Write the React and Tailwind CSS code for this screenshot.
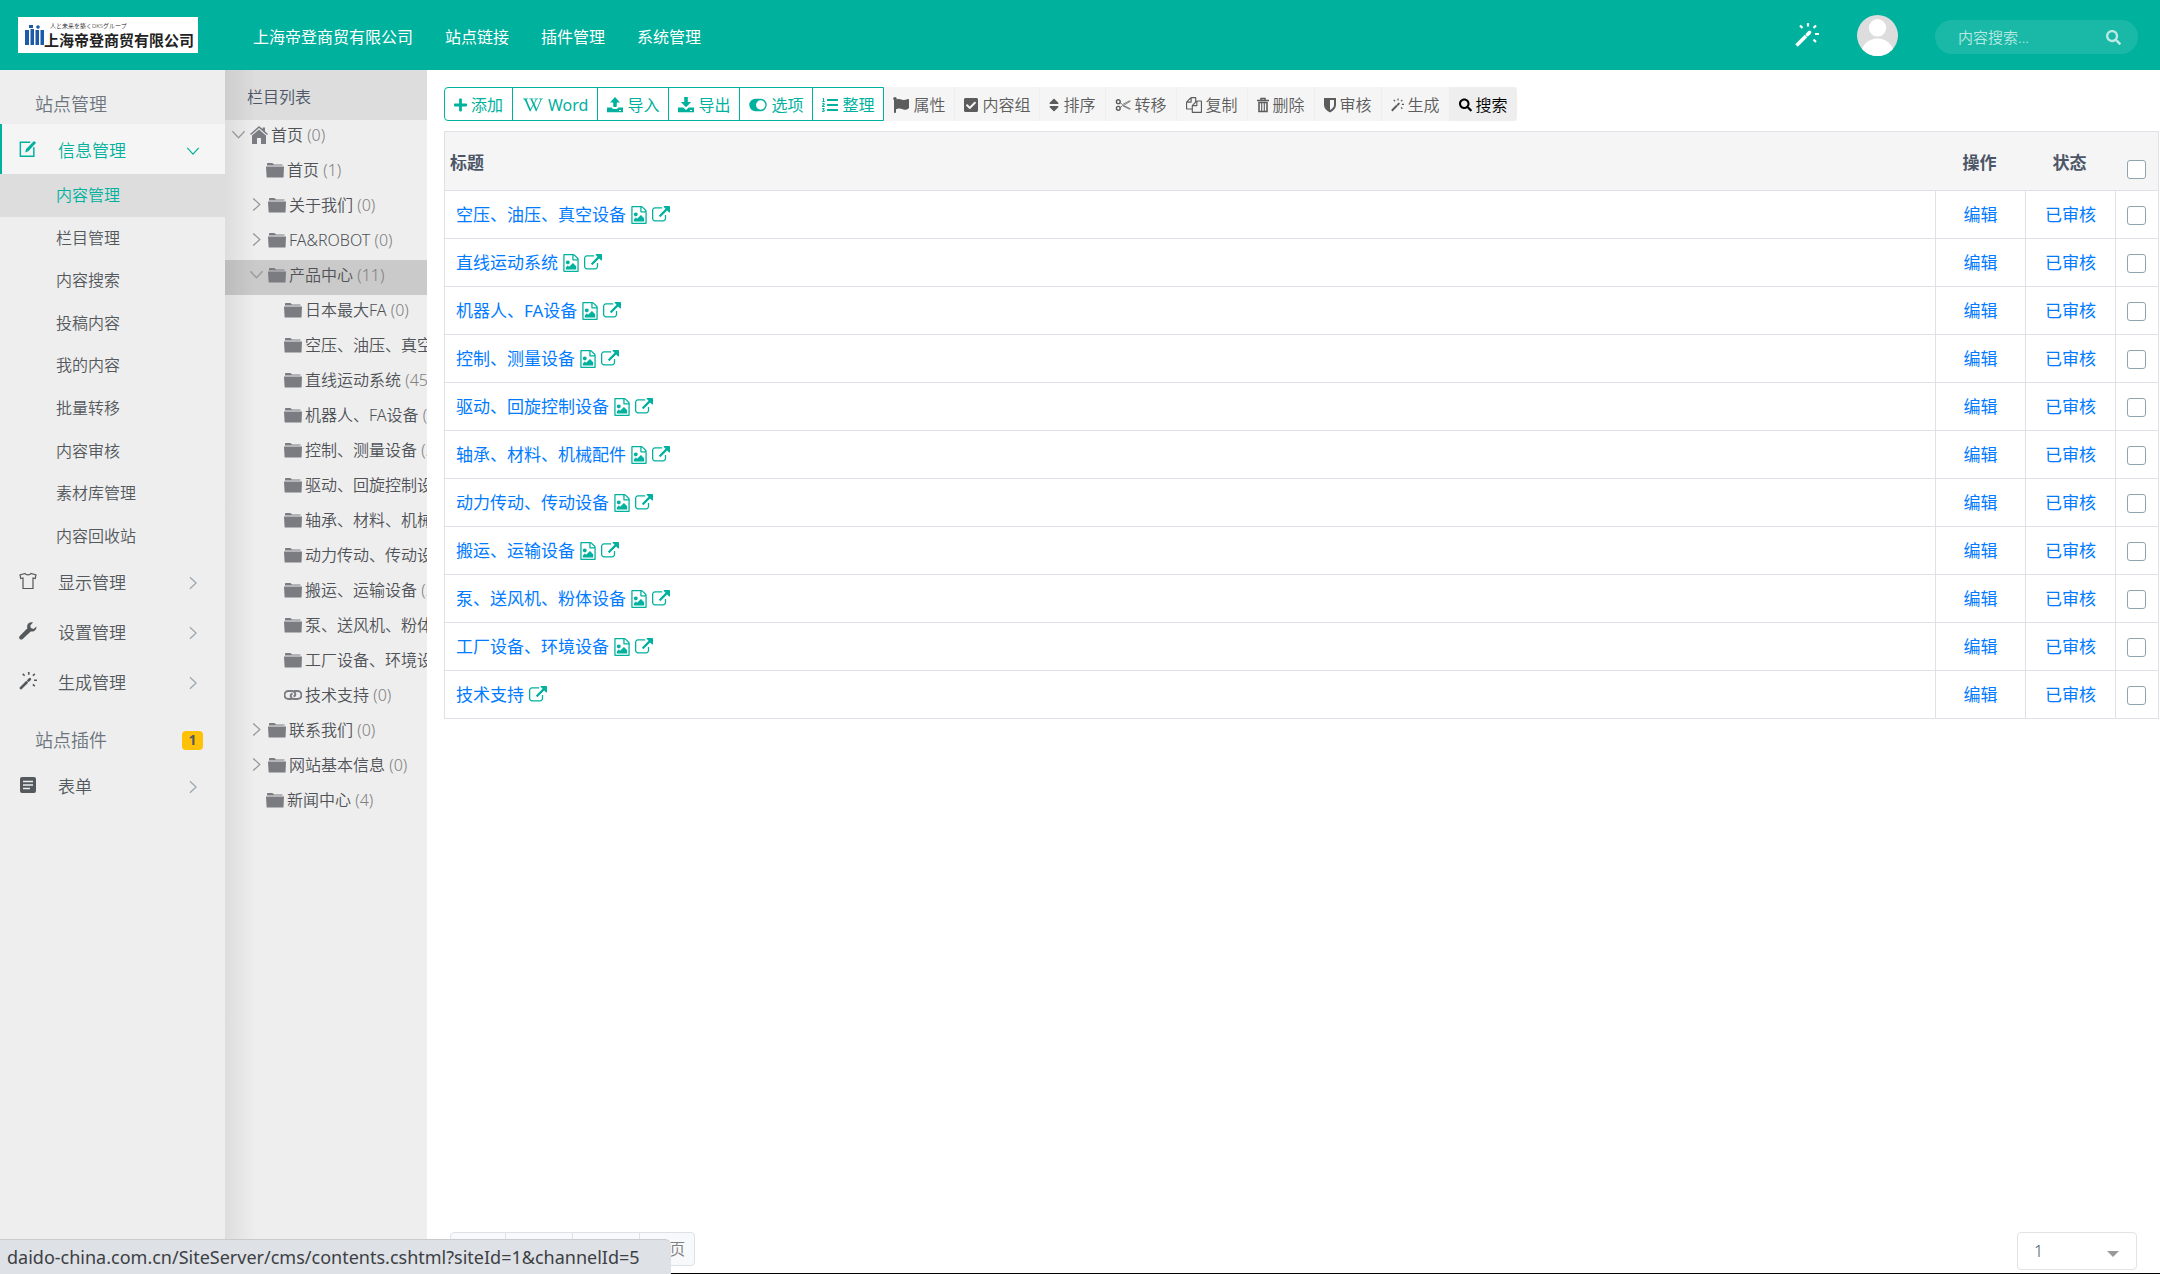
import React from "react";
import { FaWikipediaW, FaListOl, FaFlag, FaCheckSquare, FaSort, FaPlus, FaSearch } from "react-icons/fa";

const navLinks = ["上海帝登商贸有限公司", "站点链接", "插件管理", "系统管理"];

const subMenu = [
  "内容管理",
  "栏目管理",
  "内容搜索",
  "投稿内容",
  "我的内容",
  "批量转移",
  "内容审核",
  "素材库管理",
  "内容回收站",
];

const channels = [
  { name: "首页", count: 1, level: 1 },
  { name: "关于我们", count: 0, level: 1, closed: true },
  { name: "FA&ROBOT", count: 0, level: 1, closed: true },
  { name: "产品中心", count: 11, level: 1, open: true },
  { name: "日本最大FA", count: 0, level: 2 },
  { name: "空压、油压、真空设备", count: 0, level: 2 },
  { name: "直线运动系统", count: 45, level: 2 },
  { name: "机器人、FA设备", count: 0, level: 2 },
  { name: "控制、测量设备", count: 2, level: 2 },
  { name: "驱动、回旋控制设备", count: 0, level: 2 },
  { name: "轴承、材料、机械配件", count: 0, level: 2 },
  { name: "动力传动、传动设备", count: 0, level: 2 },
  { name: "搬运、运输设备", count: 2, level: 2 },
  { name: "泵、送风机、粉体设备", count: 0, level: 2 },
  { name: "工厂设备、环境设备", count: 0, level: 2 },
  { name: "技术支持", count: 0, level: 2, link: true },
  { name: "联系我们", count: 0, level: 1, closed: true },
  { name: "网站基本信息", count: 0, level: 1, closed: true },
  { name: "新闻中心", count: 4, level: 1 },
];

const contents = [
  { title: "空压、油压、真空设备", image: true },
  { title: "直线运动系统", image: true },
  { title: "机器人、FA设备", image: true },
  { title: "控制、测量设备", image: true },
  { title: "驱动、回旋控制设备", image: true },
  { title: "轴承、材料、机械配件", image: true },
  { title: "动力传动、传动设备", image: true },
  { title: "搬运、运输设备", image: true },
  { title: "泵、送风机、粉体设备", image: true },
  { title: "工厂设备、环境设备", image: true },
  { title: "技术支持", image: false },
];

const Wand = ({ className }) => (
  <svg viewBox="0 0 24 24" className={className} fill="none" stroke="currentColor">
    <path d="M1.500 22.500L11 13" strokeWidth="3.600" />
    <path d="M12.500 11.500l2-2" strokeWidth="3.600" strokeLinecap="round" />
    <path d="M13 0v3.500M5 2.500l2.500 2.500M21 2.500L18.500 5M20 11h4M18.500 16.500L21 19" strokeWidth="2.200" />
  </svg>
);

const ExternalLink = ({ className }) => (
  <svg viewBox="0 0 1792 1792" className={className} fill="currentColor">
    <path d="M1408 928v320q0 119-84.5 203.5t-203.5 84.5h-832q-119 0-203.5-84.5t-84.5-203.5v-832q0-119 84.5-203.5t203.5-84.5h704q14 0 23 9t9 23v64q0 14-9 23t-23 9h-704q-66 0-113 47t-47 113v832q0 66 47 113t113 47h832q66 0 113-47t47-113v-320q0-14 9-23t23-9h64q14 0 23 9t9 23zm384-864v512q0 26-19 45t-45 19-45-19l-176-176-652 652q-10 10-23 10t-23-10l-114-114q-10-10-10-23t10-23l652-652-176-176q-19-19-19-45t19-45 45-19h512q26 0 45 19t19 45z" />
  </svg>
);

const ImageFile = ({ className }) => (
  <svg viewBox="128 0 1536 1792" className={className} fill="currentColor">
    <path d="M1596 380q28 28 48 76t20 88v1152q0 40-28 68t-68 28h-1344q-40 0-68-28t-28-68v-1600q0-40 28-68t68-28h896q40 0 88 20t76 48zm-444-244v376h376q-10-29-22-41l-313-313q-12-12-41-22zm384 1528v-1024h-416q-40 0-68-28t-28-68v-416h-768v1536h1280zm-128-448v320h-1024v-192l192-192 128 128 384-384zm-832-192q-80 0-136-56t-56-136 56-136 136-56 136 56 56 136-56 136-136 56z" />
  </svg>
);

const Copy = ({ className }) => (
  <svg viewBox="0 0 1792 1792" className={className} fill="currentColor">
    <path d="M1696 384q40 0 68 28t28 68v1216q0 40-28 68t-68 28h-960q-40 0-68-28t-28-68v-288h-544q-40 0-68-28t-28-68v-672q0-40 20-88t48-76l408-408q28-28 76-48t88-20h416q40 0 68 28t28 68v328q68-40 128-40h416zm-544 213l-299 299h299v-299zm-640-384l-299 299h299v-299zm196 647l316-316v-416h-384v416q0 40-28 68t-68 28h-416v640h512v-256q0-40 20-88t48-76zm956 804v-1152h-384v416q0 40-28 68t-68 28h-416v640h896z" />
  </svg>
);

const Folder = ({ className }) => (
  <svg viewBox="0 0 18 18" className={className} fill="currentColor">
    <path d="M1 4.500V2.800C1 2.200 1.400 2 2 2h4.500l1.500 1.500h8.500v1z" />
    <path d="M0 5.500h18l-.5 11H.7z" />
  </svg>
);

const Upload = ({ className }) => (
  <svg viewBox="0 0 16 16" className={className} fill="currentColor">
    <path d="M8 0L3 5.500h3.200V9c0 1.300 3.600 1.300 3.600 0V5.500H13z" />
    <path d="M0 10.500h4.700c.5 2 6.100 2 6.600 0H16v4.700H0zM12 13v1h2v-1z" fillRule="evenodd" />
  </svg>
);

const Download = ({ className }) => (
  <svg viewBox="0 0 16 16" className={className} fill="currentColor">
    <path d="M8 10.200L2.800 5h3.400V0h3.600v5h3.400z" />
    <path d="M0 10.500h5.200L8 13l2.800-2.500H16v4.700H0zM12 13v1h2v-1z" fillRule="evenodd" />
  </svg>
);

const Toggle = ({ className }) => (
  <svg viewBox="0 0 18 14" className={className} fill="none" stroke="currentColor">
    <path d="M6.500 1.500h5a5.500 5.500 0 010 11h-5a5.500 5.500 0 010-11z" fill="currentColor" strokeWidth="1.400" />
    <circle cx="11.700" cy="7" r="4.700" fill="white" stroke="none" />
  </svg>
);

const Scissors = ({ className }) => (
  <svg viewBox="0 0 17 16" className={className} fill="none" stroke="currentColor">
    <circle cx="3.500" cy="4.500" r="2" strokeWidth="1.500" />
    <circle cx="3.500" cy="11.500" r="2" strokeWidth="1.500" />
    <path d="M5.500 5.500L8 7.500 15.500 3.500l.8.5L9 8.500l7.300 3.500-.8.500L8 8.700l-2.500 2" strokeWidth=".8" />
  </svg>
);

const Trash = ({ className }) => (
  <svg viewBox="0 0 12 16" className={className} fill="none" stroke="currentColor">
    <path d="M0 3.500h12M4 3V1.500h4V3" strokeWidth="1.500" />
    <path d="M2 5.500v9h8v-9z" strokeWidth="1.600" />
    <path d="M4.700 5v9M7.300 5v9" strokeWidth="1.100" />
  </svg>
);

const Shield = ({ className }) => (
  <svg viewBox="0 0 12 16" className={className} fill="currentColor">
    <path d="M0 1h12v7c0 3-2.500 5.500-6 7.500C2.500 13.500 0 11 0 8zM6 3v10c2.300-1.400 4-3 4-5V3z" fillRule="evenodd" />
  </svg>
);

const EditSquare = ({ className }) => (
  <svg viewBox="0 0 16 16" className={className} fill="none" stroke="currentColor">
    <path d="M10 2H1.200v12.500h12V6.500" strokeWidth="1.300" />
    <path d="M5.500 11l.8-3L13.300.8l1.900 1.700L8.300 10z" fill="currentColor" stroke="none" />
  </svg>
);

const Shirt = ({ className }) => (
  <svg viewBox="0 0 18 18" className={className} fill="none" stroke="currentColor" strokeWidth="1.200">
    <path d="M6 1.500L1 3l.8 3.500L4 6v10.500h10V6l2.200.5L17 3l-5-1.500c-1 1.800-5 1.800-6 0z" />
  </svg>
);

const Wrench = ({ className }) => (
  <svg viewBox="0 0 18 18" className={className} fill="currentColor">
    <path d="M17.500 4.500L14.500 7 11.800 6 11.300 3.500 14 .5C11.500-.3 9 1 8.300 3.300c-.3 1-.2 2 .1 2.900L.8 13.900c-.9.900-.9 2.200-.1 3s2.200.9 3 .1l8-7.600c3 .9 6-1.400 5.800-4.900z" />
  </svg>
);

const FormIcon = ({ className }) => (
  <svg viewBox="0 0 18 18" className={className}>
    <rect x="1" y="1" width="16" height="16" rx="2" fill="currentColor" />
    <path d="M4 5.500h10M4 9h10M4 12.500h7" stroke="#eee" strokeWidth="1.500" />
  </svg>
);

const Chevron = ({ open, className }) => (
  <svg viewBox="0 0 16 16" className={className} fill="none" stroke="currentColor" strokeWidth="1.400">
    <path d={open ? "M1.500 4.500L8 11.500l6.500-7" : "M4.500 1.500l7 6.500-7 6.500"} />
  </svg>
);

const House = ({ className }) => (
  <svg viewBox="0 0 18 18" className={className} fill="currentColor">
    <path d="M9 0L0 8l1 1 8-7 8 7 1-1-3-2.700V1.500h-2.500v1.600z" />
    <path d="M9 3.500L2 9.500V18h5v-6h4v6h5V9.500z" />
  </svg>
);

const LinkIcon = ({ className }) => (
  <svg viewBox="0 0 18 12" className={className} fill="none" stroke="currentColor" strokeWidth="2">
    <path d="M8 10H4.500a4 4 0 010-8H8c3.500 0 4.500 4.500 1.500 5.500" />
    <path d="M10 2h3.500a4 4 0 010 8H10C6.500 10 5.500 5.500 8.500 4.500" />
  </svg>
);

const mainButtons = [
  { label: "添加", Icon: FaPlus, size: "w-[13px]" },
  { label: "Word", Icon: FaWikipediaW, size: "w-[22px]" },
  { label: "导入", Icon: Upload, size: "w-4" },
  { label: "导出", Icon: Download, size: "w-4" },
  { label: "选项", Icon: Toggle, size: "w-[18px]" },
  { label: "整理", Icon: FaListOl, size: "w-4" },
];

const grayButtons = [
  { label: "属性", Icon: FaFlag, size: "w-4" },
  { label: "内容组", Icon: FaCheckSquare, size: "w-[14px]" },
  { label: "排序", Icon: FaSort, size: "w-[10px]" },
  { label: "转移", Icon: Scissors, size: "w-4" },
  { label: "复制", Icon: Copy, size: "w-4" },
  { label: "删除", Icon: Trash, size: "w-3" },
  { label: "审核", Icon: Shield, size: "w-3" },
  { label: "生成", Icon: Wand, size: "w-[13px]" },
];

const sideGroups = [
  { label: "显示管理", Icon: Shirt },
  { label: "设置管理", Icon: Wrench },
  { label: "生成管理", Icon: Wand },
];

const SideItem = ({ label, Icon }) => (
  <a href="#" className="flex h-[50px] items-center pl-[19px] pr-[25px] pt-[2px] text-[17px] text-[#54595d]">
    <Icon className="mb-1 mr-[21px] h-[18px] w-[18px] shrink-0" />
    <span>{label}</span>
    <Chevron className="ml-auto h-[14px] w-[14px] text-[#98a6ad]" />
  </a>
);

const Logo = () => (
  <a href="#" className="flex h-9 w-[180px] items-center overflow-hidden bg-white pl-[6px]">
    <svg viewBox="0 0 20 22" className="h-[22px] w-5 shrink-0" fill="#1d5aa8">
      <path d="M5 1h4v3h-4zM1 6h4v15H1zM6.500 5H10v16H6.500zM11.500 6H15v15h-3.500zM16.500 6H20v15h-3.500z" />
      <circle cx="14" cy="3" r="1.800" />
    </svg>
    <span className="flex flex-col whitespace-nowrap text-[#222]">
      <span className="pl-[6px] text-[6px] leading-[9px]">人と未来を築くDKSグループ</span>
      <span className="text-[15px] font-bold leading-[18px]">上海帝登商贸有限公司</span>
    </span>
  </a>
);

const Header = () => (
  <header className="flex h-[70px] items-center bg-[#00b19d] pl-[18px] pr-[22px] text-white">
    <Logo />
    <nav className="ml-[55px] flex gap-8 pt-[3px] text-base font-normal">
      {navLinks.map((link) => (
        <a key={link} href="#">
          {link}
        </a>
      ))}
    </nav>
    <button type="button" aria-label="生成" className="ml-auto">
      <Wand className="h-6 w-6" />
    </button>
    <svg viewBox="0 0 40 40" className="ml-[38px] h-[41px] w-[41px] rounded-full bg-[#ddd]" fill="white">
      <circle cx="20" cy="12.500" r="8.500" />
      <ellipse cx="20" cy="38" rx="16" ry="15" />
    </svg>
    <div className="ml-[37px] mt-1 flex h-[34px] w-[203px] items-center rounded-full bg-white/10 pl-[23px] pr-[17px]">
      <input
        type="text"
        aria-label="内容搜索"
        placeholder="内容搜索..."
        className="min-w-0 flex-1 bg-transparent text-[15px] outline-none placeholder:text-white/70"
      />
      <FaSearch className="h-[15px] w-[15px] text-white/70" />
    </div>
  </header>
);

const Sidebar = () => (
  <aside className="w-[225px] shrink-0 bg-[#eee]">
    <h2 className="flex h-[54px] items-center pl-[35px] pt-[14px] text-[18px] text-[#6c757d]">站点管理</h2>
    <a
      href="#"
      className="flex h-[50px] items-center border-l-2 border-[#00b19d] bg-[#f5f5f5] pl-[17px] pr-[25px] pt-[3px] text-[17px] text-[#00b19d]"
    >
      <EditSquare className="mb-1 mr-[21px] h-[18px] w-[18px]" />
      <span>信息管理</span>
      <Chevron open className="ml-auto h-[14px] w-[14px]" />
    </a>
    <ul className="grid h-[383px] auto-rows-fr text-base">
      {subMenu.map((item, i) => (
        <li key={item} className="flex">
          <a
            href="#"
            className={`flex flex-1 items-center pl-14 ${i === 0 ? "bg-[#ddd] text-[#00b19d]" : "text-[#54595d]"}`}
          >
            {item}
          </a>
        </li>
      ))}
    </ul>
    {sideGroups.map((group) => (
      <SideItem key={group.label} {...group} />
    ))}
    <h2 className="flex h-[54px] items-center pl-[35px] pr-[22px] pt-3 text-[18px] text-[#6c757d]">
      站点插件
      <span className="ml-auto flex h-[19px] w-[21px] items-center justify-center rounded bg-[#ffc107] text-sm font-bold text-[#54595d]">
        1
      </span>
    </h2>
    <SideItem label="表单" Icon={FormIcon} />
  </aside>
);

const ChannelRow = ({ channel }) => {
  const { name, count, level, open, closed, link } = channel;
  const expandable = open || closed;
  const Icon = link ? LinkIcon : Folder;
  let indent = "pl-[41px]";
  if (level === 2) indent = "pl-[59px]";
  if (expandable) indent = "pl-6";

  return (
    <li>
      <a
        href="#"
        className={`flex h-[35px] items-center overflow-hidden whitespace-nowrap pb-[6px] text-base text-[#4f5257] ${indent} ${open ? "bg-black/15" : ""}`}
      >
        {expandable && <Chevron open={open} className="mr-1 h-[15px] w-[15px] shrink-0 text-[#999]" />}
        <Icon className="mr-[3px] h-[18px] w-[18px] shrink-0 text-[#7a7c82]" />
        <span>
          {name} <span className="text-[#808080]">({count})</span>
        </span>
      </a>
    </li>
  );
};

const ChannelTree = () => (
  <section className="w-[202px] shrink-0 overflow-hidden bg-[#eee] bg-linear-to-r from-[#ddd] to-[#eee] to-15%">
    <h2 className="flex h-[50px] items-center bg-black/7 pl-[22px] pt-[3px] text-base text-[#4c5667]">栏目列表</h2>
    <ul>
      <li>
        <a href="#" className="flex h-[35px] items-center pb-[6px] pl-[6px] text-base text-[#4f5257]">
          <Chevron open className="mr-1 h-[15px] w-[15px] text-[#999]" />
          <House className="mr-[3px] h-[18px] w-[18px] text-[#7a7c82]" />
          <span>
            首页 <span className="text-[#808080]">(0)</span>
          </span>
        </a>
      </li>
      {channels.map((channel) => (
        <ChannelRow key={channel.name + channel.level} channel={channel} />
      ))}
    </ul>
  </section>
);

const ToolButton = ({ label, Icon, size }) => (
  <button type="button" className="flex items-center gap-1 px-[9px] pt-[2px]">
    <Icon className={`h-4 ${size}`} />
    {label}
  </button>
);

const Toolbar = () => (
  <div className="flex h-[34px] text-base">
    <div className="flex divide-x divide-[#00b19d] rounded-l border border-[#00b19d] font-normal text-[#00b19d]">
      {mainButtons.map((button) => (
        <ToolButton key={button.label} {...button} />
      ))}
    </div>
    <div className="flex divide-x divide-[#eee] overflow-hidden rounded-r bg-[#f5f5f5] text-[#5c5c5c]">
      {grayButtons.map((button) => (
        <ToolButton key={button.label} {...button} />
      ))}
      <div className="flex bg-[#eee] text-black">
        <ToolButton label="搜索" Icon={FaSearch} size="w-[13px]" />
      </div>
    </div>
  </div>
);

const Checkbox = ({ label }) => (
  <input
    type="checkbox"
    aria-label={label}
    className="block h-[19px] w-[19px] appearance-none rounded-[3px] border border-[#90a4ae] bg-white"
  />
);

const ContentTable = () => (
  <table className="mt-[10px] w-full table-fixed border-collapse border border-[#dee2e6] text-[17px]">
    <colgroup>
      <col />
      <col className="w-[90px]" />
      <col className="w-[90px]" />
      <col className="w-[43px]" />
    </colgroup>
    <thead>
      <tr className="h-[59px] bg-[#f5f5f5] text-[#4c5667]">
        <th className="pl-[5px] pt-1 text-left font-bold">标题</th>
        <th className="pr-[2px] pt-1 font-bold">操作</th>
        <th className="pr-[2px] pt-1 font-bold">状态</th>
        <th className="pl-[11px] pt-4">
          <Checkbox label="全选" />
        </th>
      </tr>
    </thead>
    <tbody>
      {contents.map(({ title, image }) => (
        <tr key={title} className="h-12 font-normal text-[#007bff]">
          <td className="border border-[#dee2e6] pl-[11px]">
            <div className="flex items-center gap-[5px]">
              <a href="#">{title}</a>
              {image && <ImageFile className="h-[18px] w-4 text-[#00b19d]" />}
              <ExternalLink className="h-[18px] w-[18px] text-[#00b19d]" />
            </div>
          </td>
          <td className="border border-[#dee2e6] text-center">
            <a href="#">编辑</a>
          </td>
          <td className="border border-[#dee2e6] text-center">
            <a href="#">已审核</a>
          </td>
          <td className="border border-[#dee2e6] pl-[11px] pt-px">
            <Checkbox label={title} />
          </td>
        </tr>
      ))}
    </tbody>
  </table>
);

const Pager = () => (
  <footer className="mt-auto flex items-start justify-between pb-[3px] pl-[6px] pr-[22px]">
    <div className="flex h-[34px] divide-x divide-[#dee2e6] rounded border border-[#dee2e6] bg-[#f8f9fa] text-base text-[#808080]">
      {["首 页", "上一页", "下一页", "末 页"].map((label) => (
        <button key={label} type="button" className="px-[9px]">
          {label}
        </button>
      ))}
    </div>
    <div className="relative">
      <select
        aria-label="页码"
        className="h-[38px] w-[120px] appearance-none rounded border border-[#e3e3e3] bg-white pl-4 text-base text-[#435966]"
      >
        <option>1</option>
      </select>
      <svg viewBox="0 0 12 6" className="pointer-events-none absolute right-[18px] top-[19px] h-[6px] w-3" fill="#999">
        <path d="M0 0h12L6 6z" />
      </svg>
    </div>
  </footer>
);

export default function App() {
  return (
    <div className="flex min-h-screen flex-col border-b border-black bg-white font-['Noto_Sans','Noto_Sans_CJK_SC',sans-serif] font-[350] leading-normal">
      <Header />
      <div className="flex flex-1">
        <Sidebar />
        <ChannelTree />
        <main className="flex min-w-0 flex-1 flex-col pl-[17px] pr-px pt-[17px]">
          <Toolbar />
          <ContentTable />
          <Pager />
        </main>
      </div>
      <div className="fixed bottom-0 left-0 z-20 flex h-[35px] w-[671px] items-center rounded-tr-md border-t border-[#c8cacd] bg-[#dee1e6] pl-[7px] pt-px text-[18px] font-normal text-[#3c4043]">
        daido-china.com.cn/SiteServer/cms/contents.cshtml?siteId=1&channelId=5
      </div>
    </div>
  );
}
